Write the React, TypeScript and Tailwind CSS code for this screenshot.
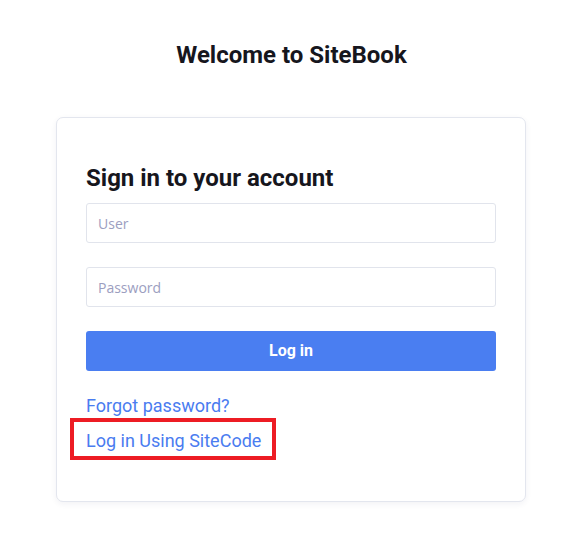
import React from "react";

export default function App() {
  return (
    <div className="min-h-[551px] w-full bg-white" style={{ fontFamily: "Roboto, 'Liberation Sans', sans-serif" }}>
      <div className="flex flex-col items-center pt-[39px] pr-[5px]">
        <h1 className="text-[24px] leading-[32px] font-bold text-[#16161d]">Welcome to SiteBook</h1>
      </div>
      <div className="mx-[56px] mt-[46px] w-[470px] rounded-[7px] border border-[#e3e6ee] bg-white px-[29px] pt-[44px] pb-[47px] shadow-[0_2px_6px_rgba(30,40,80,0.06)]">
        <h2 className="text-[24px] leading-[32px] font-bold text-[#16161d]">Sign in to your account</h2>
        <input
          className="mt-[9px] block h-[40px] w-full rounded-[3px] border border-[#e1e4ec] px-[11px] text-[14px] outline-none placeholder:text-[#9c9ebf]"
          style={{ fontFamily: "'Open Sans', 'Noto Sans', sans-serif" }}
          placeholder="User"
        />
        <input
          type="password"
          className="mt-[24px] block h-[40px] w-full rounded-[3px] border border-[#e1e4ec] px-[11px] text-[14px] outline-none placeholder:text-[#9c9ebf]"
          style={{ fontFamily: "'Open Sans', 'Noto Sans', sans-serif" }}
          placeholder="Password"
        />
        <button className="mt-[24px] flex h-[40px] w-full items-center justify-center rounded-[3px] bg-[#4a7ef1] text-[16px] font-bold text-white">
          Log in
        </button>
        <div className="mt-[21px] flex flex-col items-start">
          <a className="text-[18px] leading-[27px] text-[#4a7cf0]" href="#">Forgot password?</a>
          <div className="relative mt-[8px]">
            <a className="text-[18px] leading-[27px] text-[#4a7cf0]" href="#">Log in Using SiteCode</a>
            <div className="pointer-events-none absolute -left-[16px] -right-[15px] -top-[9px] -bottom-[6px] border-[4px] border-[#ed1c24]" />
          </div>
        </div>
      </div>
    </div>
  );
}
